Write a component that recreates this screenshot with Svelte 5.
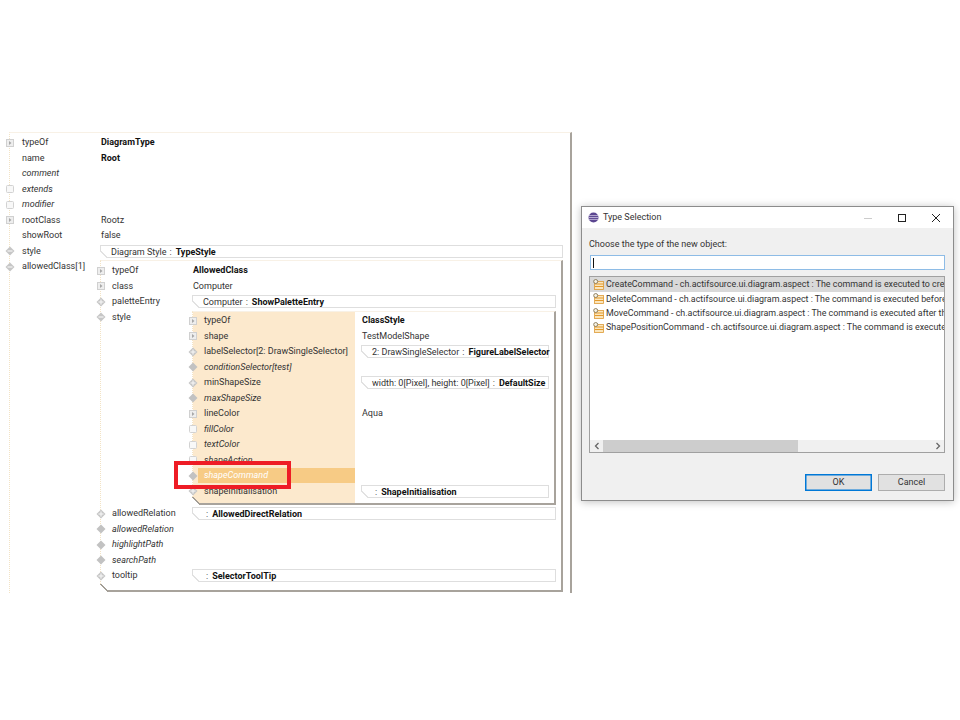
<script>
  const exp = 'expand', emp = 'empty', plus = 'plus', minus = 'minus', solid = 'solid';

  const slotRows = [
    { icon: exp, label: 'typeOf', text: 'ClassStyle', bold: true },
    { icon: exp, label: 'shape', text: 'TestModelShape' },
    { icon: plus, label: 'labelSelector[2: DrawSingleSelector]', box: ['2: DrawSingleSelector', 'FigureLabelSelector'] },
    { icon: solid, label: 'conditionSelector[test]', italic: true },
    { icon: plus, label: 'minShapeSize', box: ['width: 0[Pixel], height: 0[Pixel]', 'DefaultSize'] },
    { icon: solid, label: 'maxShapeSize', italic: true },
    { icon: exp, label: 'lineColor', text: 'Aqua' },
    { icon: emp, label: 'fillColor', italic: true },
    { icon: emp, label: 'textColor', italic: true },
    { icon: emp, label: 'shapeAction', italic: true },
    { icon: solid, label: 'shapeCommand', italic: true, active: true },
    { icon: plus, label: 'shapeInitialisation', box: ['', 'ShapeInitialisation'] }
  ];

  const classRows = [
    { icon: exp, label: 'typeOf', text: 'AllowedClass', bold: true },
    { icon: exp, label: 'class', text: 'Computer' },
    { icon: plus, label: 'paletteEntry', box: ['Computer', 'ShowPaletteEntry'] },
    { icon: minus, label: 'style', panel: { rows: slotRows, kind: 'slots' } },
    { icon: plus, label: 'allowedRelation', box: ['', 'AllowedDirectRelation'] },
    { icon: solid, label: 'allowedRelation', italic: true },
    { icon: solid, label: 'highlightPath', italic: true },
    { icon: solid, label: 'searchPath', italic: true },
    { icon: plus, label: 'tooltip', box: ['', 'SelectorToolTip'] }
  ];

  const rootRows = [
    { icon: exp, label: 'typeOf', text: 'DiagramType', bold: true },
    { label: 'name', text: 'Root', bold: true },
    { label: 'comment', italic: true },
    { icon: emp, label: 'extends', italic: true },
    { icon: emp, label: 'modifier', italic: true },
    { icon: exp, label: 'rootClass', text: 'Rootz' },
    { label: 'showRoot', text: 'false' },
    { icon: minus, label: 'style', box: ['Diagram Style', 'TypeStyle'] },
    { icon: minus, label: 'allowedClass[1]', panel: { rows: classRows, kind: 'cls' } }
  ];

  const types = [
    ['CreateCommand', 'The command is executed to create a new shape'],
    ['DeleteCommand', 'The command is executed before the shape is deleted'],
    ['MoveCommand', 'The command is executed after the shape was moved'],
    ['ShapePositionCommand', 'The command is executed to position the shape']
  ];
</script>

{#snippet icon(kind)}
  <svg class="ico" viewBox="0 0 10 10" width="10" height="10">
    {#if kind === 'expand'}
      <rect x="1.5" y="1.5" width="7" height="7" fill="#eee" stroke="#d0d0d0" />
      <path d="M4 3l2.5 2L4 7z" fill="#a8a8a8" />
    {:else if kind === 'empty'}
      <rect x="1.5" y="1.5" width="7" height="7" rx="1" fill="#f8f8f8" stroke="#d2d2d2" />
    {:else if kind === 'solid'}
      <path d="M5 .5L9.5 5 5 9.5.5 5z" fill="#c2c2c2" />
    {:else}
      <path d="M5 .5L9.5 5 5 9.5.5 5z" fill="#c6c6c6" />
      <path d="M2.5 5h5" stroke="#f4f4f4" stroke-width="1.2" />
      {#if kind === 'plus'}<path d="M5 2.5v5" stroke="#f4f4f4" stroke-width="1.2" />{/if}
    {/if}
  </svg>
{/snippet}

{#snippet panel(rows, kind)}
  <div class="panel {kind}">
    {#each rows as row}
      <div class="row">
        <div class="key">
          <span class="slot">{#if row.icon}{@render icon(row.icon)}{/if}</span>
          <span class="name" class:it={row.italic} class:active={row.active}>{row.label}</span>
        </div>
        <div class="val">
          {#if row.box}
            <div class="box"><span>{row.box[0]}</span><span class="sep">:</span><b>{row.box[1]}</b></div>
          {:else if row.panel}
            {@render panel(row.panel.rows, row.panel.kind)}
          {:else if row.text}
            <span class="txt" class:strong={row.bold}>{row.text}</span>
          {/if}
        </div>
      </div>
    {/each}
  </div>
{/snippet}

<div class="page">
  <div class="editor">
    {@render panel(rootRows, 'root')}
    <div class="callout"></div>
  </div>

  <div class="dialog">
    <div class="titlebar">
      <svg class="eclipse" viewBox="0 0 12 12" width="11" height="11">
        <circle cx="6" cy="6" r="5.5" fill="#5b4690" />
        <path d="M.9 3.9h10.2M.5 6h11M.9 8.1h10.2" stroke="#d9d2ea" stroke-width=".8" />
      </svg>
      <span class="title">Type Selection</span>
      <div class="winbtns">
        <svg viewBox="0 0 10 10" width="10" height="10"><path d="M1 5.5h8" stroke="#ccc" /></svg>
        <svg viewBox="0 0 10 10" width="10" height="10"><rect x="1.5" y="1.5" width="7" height="7" fill="none" stroke="#222" /></svg>
        <svg viewBox="0 0 10 10" width="10" height="10"><path d="M1 1l8 8M9 1l-8 8" stroke="#222" /></svg>
      </div>
    </div>
    <div class="body">
      <div class="prompt">Choose the type of the new object:</div>
      <div class="input"><span class="caret"></span></div>
      <div class="list">
        <div class="items">
          {#each types as [name, desc], i}
            <div class="item" class:sel={i === 0}>
              <svg viewBox="0 0 11 11" width="11" height="11" class="typeico">
                <rect x="1.5" y="2.5" width="9" height="8" fill="#fbe6bd" stroke="#dd9a35" stroke-width=".8" />
                <path d="M2 5h8.500M2 7.500h8.500" stroke="#e39a2c" stroke-width="1.100" />
                <circle cx="2.700" cy="2.500" r="2" fill="#f7f3e6" stroke="#7a6a45" stroke-width=".8" />
              </svg>
              <span>{name} - ch.actifsource.ui.diagram.aspect : {desc}</span>
            </div>
          {/each}
        </div>
        <div class="hscroll">
          <svg viewBox="0 0 6 8" width="6" height="8"><path d="M4.5 1L1.5 4l3 3" fill="none" stroke="#666" stroke-width="1.3" /></svg>
          <div class="track"><div class="thumb"></div></div>
          <svg viewBox="0 0 6 8" width="6" height="8"><path d="M1.5 1l3 3-3 3" fill="none" stroke="#666" stroke-width="1.3" /></svg>
        </div>
      </div>
      <div class="buttons">
        <div class="btn primary">OK</div>
        <div class="btn">Cancel</div>
      </div>
    </div>
  </div>
</div>

<style>
  :global(body) { background: #fff; }

  .page { display: flex; align-items: flex-start; width: 960px; height: 720px; padding: 132px 0 0 9px; box-sizing: border-box; font: 9px/15.5px Roboto, sans-serif; color: #333; overflow: hidden; }

  .editor { position: relative; width: 563px; flex: none; }

  .panel { position: relative; background: #fff; border-top: 1px solid #f8f1e6; border-left: 1px dotted #f3e3c4; }
  .panel::after { content: ""; position: absolute; left: -1px; bottom: -2px; width: 8px; height: 8px; background: linear-gradient(to top right, #fff 46%, #a39e96 46%, #a39e96 58%, transparent 58%); }
  .root { padding: 2px 0 5px; border-right: 2px solid #a8a39c; height: 461px; box-sizing: border-box; }
  .root::after { display: none; }
  .cls { margin: 1px 0 1px; padding: 2px 0 6.5px; border-right: 2px solid #a8a39c; border-bottom: 2px solid #a8a39c; }
  .slots { margin: 1px 0 1.5px; padding: 1.5px 0 3.5px; border-right: 2px solid #a8a39c; border-bottom: 2px solid #a8a39c; background: linear-gradient(to right, #fce9cd 162px, #fff 162px); }

  .row { display: grid; }
  .root > .row { grid-template-columns: 90px 1fr; }
  .cls > .row { grid-template-columns: 91px 1fr; }
  .slots > .row { grid-template-columns: 168px 1fr; }

  .key { display: flex; height: 15.5px; margin-left: -5px; white-space: nowrap; }
  .slot { flex: none; width: 10px; display: flex; align-items: center; }
  .ico { display: block; }
  .name { flex: 1; padding-left: 7px; margin-right: 6px; margin-left: -1px; }
  .root > .row > .key > .name { padding-left: 8px; }
  .it { font-style: italic; }
  .active { background: #f7cb85; color: #fff; height: 15px; margin-left: 0; padding-left: 6px; }

  .val { min-width: 0; padding-right: 5px; }
  .root > .row > .val { padding-right: 7px; }
  .txt { padding-left: 1px; }
  .strong { font-weight: 700; color: #111; }

  .box { position: relative; height: 13px; line-height: 12px; margin-top: 1px; padding-left: 10px; border: 1px solid #dedede; background: #fff; white-space: nowrap; box-sizing: border-box; }
  .box b { color: #111; }
  .sep { margin: 0 4px 0 3px; }
  .box::before { content: ""; position: absolute; left: -1px; bottom: -1px; width: 7px; height: 7px; background: linear-gradient(to top right, #fff 46%, #e2e2e2 46%, #e2e2e2 60%, transparent 60%); }

  .callout { position: absolute; left: 165px; top: 329px; width: 117px; height: 28px; box-sizing: border-box; border: 4px solid #ee1c25; }

  .dialog { flex: none; width: 373px; height: 295px; margin: 74px 0 0 9px; border: 1px solid #8c8c8c; box-sizing: border-box; box-shadow: 0 1px 8px rgba(0, 0, 0, .25); background: #f0f0f0; font-size: 9px; line-height: 14.3px; display: flex; flex-direction: column; }

  .titlebar { display: flex; align-items: center; height: 21px; flex: none; background: #fff; padding-left: 6px; }
  .eclipse { display: block; margin-right: 4px; }
  .title { flex: 1; }
  .winbtns { display: flex; gap: 24px; padding-right: 12px; }

  .body { flex: 1; display: flex; flex-direction: column; padding: 9px 8px 9px 7px; }
  .prompt { height: 18px; line-height: 14px; }
  .input { height: 15px; flex: none; margin: 0 0 6px 1px; border: 1px solid #8ebce6; background: #fff; box-sizing: border-box; padding: 2px 0 0 2px; }
  .caret { display: block; width: 1px; height: 10px; background: #111; }

  .list { height: 177px; flex: none; border: 1px solid #a0a0a0; background: #fff; box-sizing: border-box; display: flex; flex-direction: column; overflow: hidden; }
  .items { flex: 1; min-height: 0; font-size: 8.9px; padding-top: .4px; }
  .item { display: flex; align-items: center; gap: 2px; height: 14.3px; padding-left: 3px; white-space: nowrap; overflow: hidden; }
  .item.sel { background: #d9d9d9; }
  .typeico { flex: none; }

  .hscroll { display: flex; align-items: center; height: 12px; flex: none; background: #f0f0f0; padding: 0 3px 0 4px; }
  .track { flex: 1; height: 12px; padding: 0 0 0 3px; }
  .thumb { width: 195px; height: 12px; background: #cdcdcd; }

  .buttons { display: flex; justify-content: flex-end; gap: 6px; margin-top: 21px; }
  .btn { width: 67px; height: 17px; line-height: 15px; box-sizing: border-box; border: 1px solid #adadad; background: #e1e1e1; text-align: center; }
  .primary { border: 1px solid #0078d7; box-shadow: inset 0 0 0 .5px #0078d7; }
</style>
